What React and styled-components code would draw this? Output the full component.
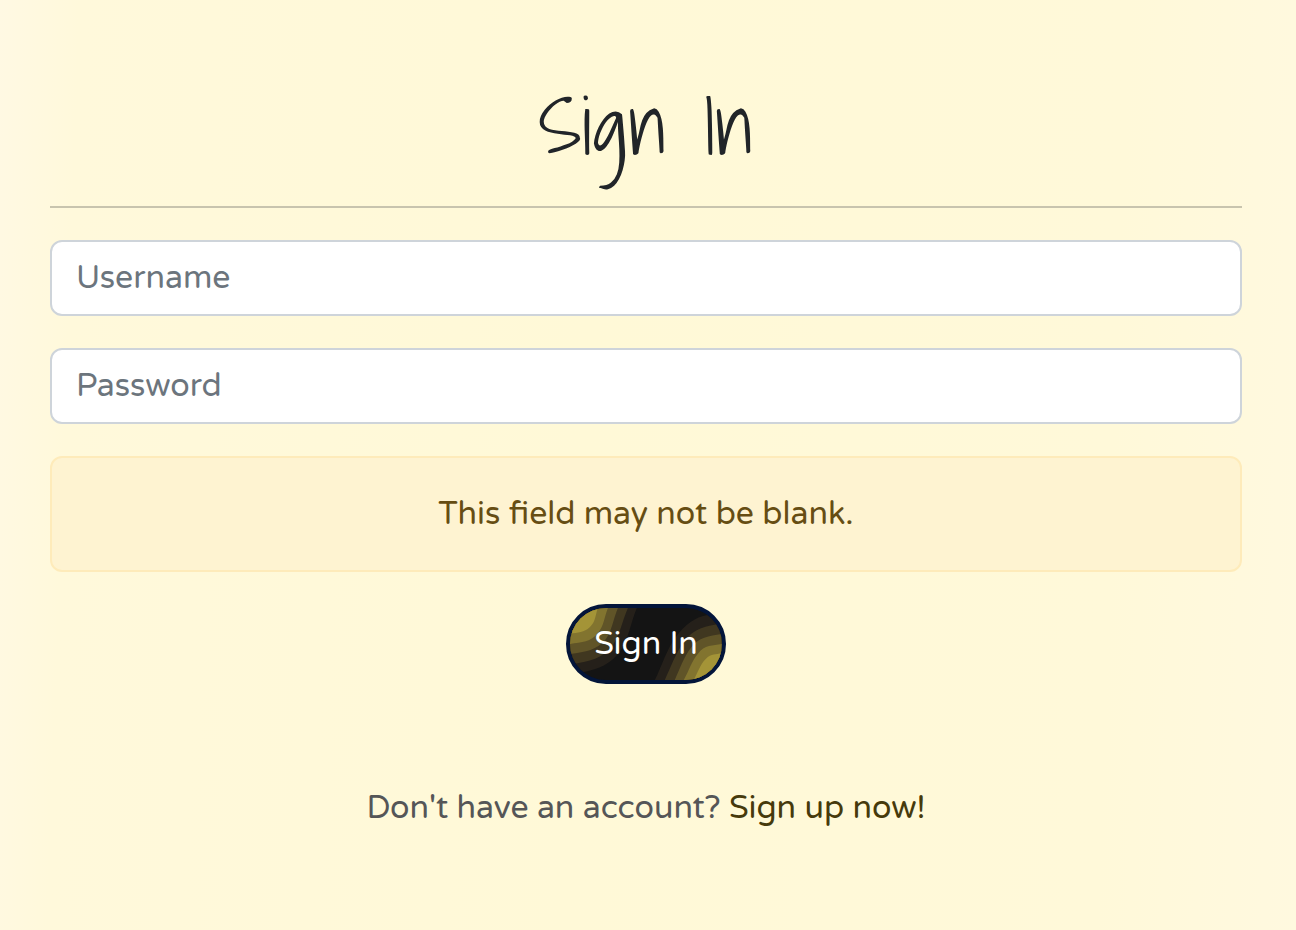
import React from "react";
import styled, { createGlobalStyle } from "styled-components";

const GlobalStyle = createGlobalStyle`
  *, *::before, *::after { box-sizing: border-box; }
  body {
    margin: 0;
    min-height: 100vh;
    color: #212529;
    font-family: "Varela Round", "Open Sans", sans-serif;
    font-size: 32px;
    line-height: 48px;
    background: linear-gradient(92deg, #fff9e3 0, #fff9db 6%, #fff9d7 45%, #fff9d9 85%, #fff9df 100%);
  }
`;

const Page = styled.main`
  padding: 78px 54px 98px 50px;
  text-align: center;
`;

const Title = styled.h1`
  margin: 0;
  padding-bottom: 32px;
  border-bottom: 2px solid #c8c4ae;
  font-family: "Shadows Into Light", Lato, sans-serif;
  font-size: 80px;
  font-weight: 300;
  line-height: 96px;
`;

const Form = styled.form`
  display: flex;
  flex-direction: column;
  gap: 32px;
  margin: 32px 0 100px;
`;

const Field = styled.input`
  display: block;
  width: 100%;
  height: 76px;
  padding: 12px 24px;
  border: 2px solid #ced4da;
  border-radius: 12px;
  background: #fff;
  color: #212529;
  font: inherit;
  &::placeholder { color: #6c757d; opacity: 1; }
`;

const Alert = styled.div`
  padding: 32px;
  border: 2px solid #feebba;
  border-radius: 12px;
  background: #fef3d1;
  color: #664d13;
`;

const SubmitButton = styled.button`
  position: relative;
  align-self: center;
  overflow: hidden;
  padding: 12px 24px;
  border: 4px solid #03153a;
  border-radius: 40px;
  background: #141414;
  color: #fff;
  font: inherit;
  cursor: pointer;
`;

const Waves = styled.svg`
  position: absolute;
  inset: 0;
  width: 100%;
  height: 100%;
`;

const Label = styled.span`
  position: relative;
`;

const Prompt = styled.p`
  margin: 0;
  color: #555657;
`;

const SignUpLink = styled.a`
  color: #463a0b;
  text-decoration: none;
`;

const ButtonWaves = () => (
  <Waves viewBox="0 0 152 72" preserveAspectRatio="none" aria-hidden="true">
    <path fill="#25201a" d="M0 0H67C61 14 59 30 51 42C42 56 28 61 14 64L0 66Z" />
    <path fill="#403720" d="M0 0H58C52 14 50 27 43 37C33 50 20 54 0 56Z" />
    <path fill="#605428" d="M0 0H48C43 12 42 23 36 31C27 42 16 44 0 46Z" />
    <path fill="#82742f" d="M0 0H38C34 10 34 18 28 25C21 34 12 34 0 36Z" />
    <path fill="#a49437" d="M0 0H28C25 8 26 13 20 19C14 25 8 24 0 26Z" />
    <path fill="#c6b43e" d="M0 0H18C15 4 15 6 11 9C7 13 4 14 0 16Z" />
    <path fill="#25201a" d="M85 72C92 58 97 41 106 29C115 17 125 9 138 7L152 6V72Z" />
    <path fill="#403720" d="M95 72C101 59 106 45 114 34C123 21 137 17 152 16V72Z" />
    <path fill="#605428" d="M105 72C110 61 114 49 121 40C129 29 139 28 152 26V72Z" />
    <path fill="#82742f" d="M114 72C119 63 122 53 128 46C135 36 143 38 152 36V72Z" />
    <path fill="#a49437" d="M124 72C128 65 130 57 136 51C142 45 146 47 152 45V72Z" />
    <path fill="#c6b43e" d="M134 72C138 66 142 60 152 55V72Z" />
  </Waves>
);

export default function App() {
  return (
    <>
      <GlobalStyle />
      <Page>
        <Title>Sign In</Title>
        <Form onSubmit={(e) => e.preventDefault()} noValidate>
          <Field type="text" name="username" placeholder="Username" aria-label="Username" />
          <Field type="password" name="password" placeholder="Password" aria-label="Password" />
          <Alert role="alert">This field may not be blank.</Alert>
          <SubmitButton type="submit">
            <ButtonWaves />
            <Label>Sign In</Label>
          </SubmitButton>
        </Form>
        <Prompt>
          Don't have an account? <SignUpLink href="/signup">Sign up now!</SignUpLink>
        </Prompt>
      </Page>
    </>
  );
}
